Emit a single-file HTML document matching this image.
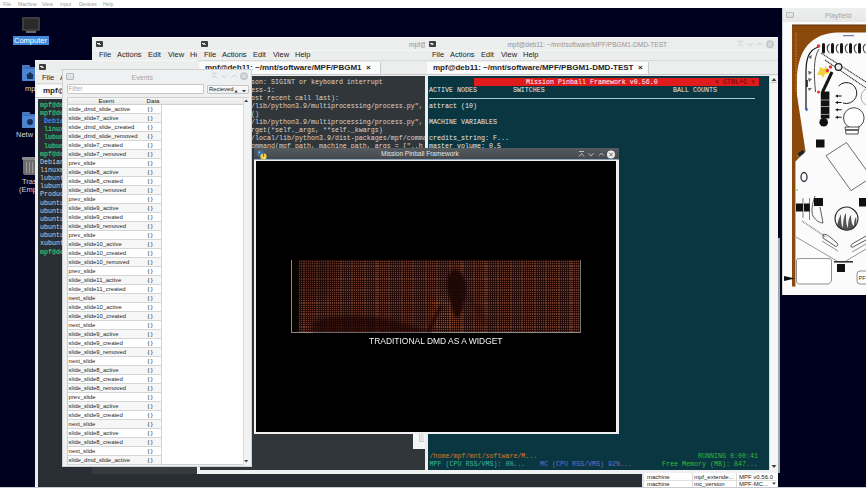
<!DOCTYPE html><html><head><meta charset="utf-8"><style>
*{margin:0;padding:0;box-sizing:border-box}
html,body{width:866px;height:488px;overflow:hidden;background:#00001f;font-family:"Liberation Sans",sans-serif}
.a{position:absolute}
.t{position:absolute;white-space:pre;line-height:1}
.m{position:absolute;white-space:pre;font-family:"Liberation Mono",monospace;font-size:6.67px;line-height:8px}
.icon{position:absolute;width:7px;height:6px;background:#3b3d3f;border-radius:1px}
.icon:after{content:"";position:absolute;left:1px;top:1.5px;width:3px;height:1px;background:#e8e8e8;box-shadow:1px 1px 0 #bbb}
.menu{position:absolute;white-space:pre;font-size:7.5px;line-height:1;color:#232627}
</style></head><body>
<div class="a" style="left:0;top:0;width:866px;height:8px;background:#fff"></div>
<div class="t" style="left:3px;top:1.5px;font-size:5px;color:#9a9a9a">File</div>
<div class="t" style="left:18px;top:1.5px;font-size:5px;color:#9a9a9a">Machine</div>
<div class="t" style="left:42px;top:1.5px;font-size:5px;color:#9a9a9a">View</div>
<div class="t" style="left:60px;top:1.5px;font-size:5px;color:#9a9a9a">Input</div>
<div class="t" style="left:79px;top:1.5px;font-size:5px;color:#9a9a9a">Devices</div>
<div class="t" style="left:103px;top:1.5px;font-size:5px;color:#9a9a9a">Help</div>
<div class="a" style="left:22px;top:17px;width:18px;height:14px;background:#3d3d3d;border-radius:1px"></div>
<div class="a" style="left:24px;top:19px;width:14px;height:10px;background:#2a2a2a"></div>
<div class="a" style="left:26px;top:31px;width:10px;height:2px;background:#6a6a6a"></div>
<div class="a" style="left:13px;top:36px;width:36px;height:9px;background:#4288dd"></div>
<div class="t" style="left:14px;top:37px;font-size:7.5px;color:#fff">Computer</div>
<div class="a" style="left:22px;top:65px;width:8px;height:3px;background:#4a7cc4;border-radius:1px 1px 0 0"></div>
<div class="a" style="left:22px;top:67px;width:16px;height:14px;background:#3f70b8;border-radius:1px"></div>
<div class="a" style="left:22px;top:69px;width:16px;height:12px;background:#4e85cf;border-radius:1px"></div>
<svg class="a" style="left:0;top:0" width="60" height="200"><path d="M30 72 l4 3.5 h-1 v3.5 h-6 v-3.5 h-1 z" fill="#16305a"/></svg>
<div class="t" style="left:25px;top:84.5px;font-size:7.5px;color:#d8d8d8">mp</div>
<div class="a" style="left:22px;top:112px;width:8px;height:3px;background:#4a7cc4;border-radius:1px 1px 0 0"></div>
<div class="a" style="left:22px;top:114px;width:16px;height:14px;background:#3f70b8;border-radius:1px"></div>
<div class="a" style="left:22px;top:116px;width:16px;height:12px;background:#4e85cf;border-radius:1px"></div>
<div class="a" style="left:27px;top:119px;width:6px;height:6px;background:#16305a;border-radius:50%"></div>
<div class="t" style="left:16px;top:131px;font-size:7.5px;color:#d8d8d8">Netw</div>
<div class="a" style="left:22px;top:157px;width:16px;height:3px;background:#8a8a8a;border-radius:1px"></div>
<div class="a" style="left:23px;top:160px;width:14px;height:15px;background:#6d6d6d;border-radius:0 0 2px 2px"></div>
<div class="a" style="left:26px;top:162px;width:1px;height:11px;background:#9a9a9a"></div>
<div class="a" style="left:29px;top:162px;width:1px;height:11px;background:#9a9a9a"></div>
<div class="a" style="left:32px;top:162px;width:1px;height:11px;background:#9a9a9a"></div>
<div class="t" style="left:22px;top:178px;font-size:7.5px;color:#d8d8d8">Tras</div>
<div class="t" style="left:19px;top:186px;font-size:7.5px;color:#d8d8d8">(Emp</div>
<div class="a" style="left:92px;top:37px;width:553px;height:453px;background:#eceded;overflow:hidden">
<div class="a" style="left:0;top:0;width:553px;height:1px;background:#f7f7f8"></div>
<div class="a" style="left:0;top:13px;width:553px;height:1px;background:#f5f6f6"></div>
<div class="a" style="left:0;top:23px;width:553px;height:1px;background:#d9dada"></div>
<div class="icon" style="left:4px;top:4px"></div>
<div class="menu" style="left:7px;top:13.8px">File</div>
<div class="menu" style="left:25px;top:13.8px">Actions</div>
<div class="menu" style="left:56px;top:13.8px">Edit</div>
<div class="menu" style="left:76px;top:13.8px">View</div>
<div class="menu" style="left:98px;top:13.8px">Help</div>
<div class="a" style="left:0;top:36px;width:553px;height:1px;background:#c9cacb"></div>
<div class="a" style="left:2px;top:24.5px;width:100px;height:11.5px;background:#fbfbfb;border-right:1px solid #c9cacb"></div>
<div class="t" style="left:8px;top:26.6px;font-size:8px;font-weight:bold;color:#1b1d1f">mpf@deb11</div>
<div class="a" style="left:3px;top:38px;width:547px;height:412px;background:#292d34"></div>
</div>
<div class="a" style="left:35px;top:60px;width:610px;height:430px;background:#eceded;overflow:hidden">
<div class="a" style="left:0;top:0;width:610px;height:1px;background:#f7f7f8"></div>
<div class="a" style="left:0;top:13px;width:610px;height:1px;background:#f5f6f6"></div>
<div class="a" style="left:0;top:23px;width:610px;height:1px;background:#d9dada"></div>
<div class="icon" style="left:4px;top:4px"></div>
<div class="menu" style="left:7px;top:13.8px">File</div>
<div class="menu" style="left:25px;top:13.8px">Actions</div>
<div class="menu" style="left:56px;top:13.8px">Edit</div>
<div class="menu" style="left:76px;top:13.8px">View</div>
<div class="menu" style="left:98px;top:13.8px">Help</div>
<div class="a" style="left:0;top:37px;width:610px;height:1px;background:#c9cacb"></div>
<div class="a" style="left:2px;top:24.5px;width:200px;height:12.5px;background:#fbfbfb;border-right:1px solid #c9cacb"></div>
<div class="t" style="left:8px;top:26.6px;font-size:8px;font-weight:bold;color:#1b1d1f">mpf@deb11: ~</div>
<div class="a" style="left:3px;top:39px;width:604px;height:388px;background:#292d34"></div>
</div>
<div class="m" style="left:40px;top:100.8px;color:#2fbf71;font-weight:bold">mpf@deb11:</div>
<div class="m" style="left:40px;top:109.0px;color:#2fbf71;font-weight:bold">mpf@deb11:</div>
<div class="m" style="left:40px;top:117.1px;color:#3d8fd8;font-weight:bold"> Debian</div>
<div class="m" style="left:40px;top:125.2px;color:#2fbf71;font-weight:bold"> linux</div>
<div class="m" style="left:40px;top:133.4px;color:#2fbf71;font-weight:bold"> lubuntu</div>
<div class="m" style="left:40px;top:141.6px;color:#2fbf71;font-weight:bold"> lubuntu</div>
<div class="m" style="left:40px;top:149.7px;color:#2fbf71;font-weight:bold">mpf@deb11:</div>
<div class="m" style="left:40px;top:157.8px;color:#cfd2d4;">Debian</div>
<div class="m" style="left:40px;top:166.0px;color:#cfd2d4;">linuxmint</div>
<div class="m" style="left:40px;top:174.2px;color:#cfd2d4;">lubuntu</div>
<div class="m" style="left:40px;top:182.3px;color:#cfd2d4;">lubuntu</div>
<div class="m" style="left:40px;top:190.4px;color:#cfd2d4;">Produc</div>
<div class="m" style="left:40px;top:198.6px;color:#cfd2d4;">ubuntu</div>
<div class="m" style="left:40px;top:206.8px;color:#cfd2d4;">ubuntu</div>
<div class="m" style="left:40px;top:214.9px;color:#cfd2d4;">ubuntu</div>
<div class="m" style="left:40px;top:223.1px;color:#cfd2d4;">ubuntu</div>
<div class="m" style="left:40px;top:231.2px;color:#cfd2d4;">ubuntu</div>
<div class="m" style="left:40px;top:239.4px;color:#cfd2d4;">xubuntu</div>
<div class="m" style="left:40px;top:247.5px;color:#2fbf71;font-weight:bold">mpf@deb11:</div>
<div class="a" style="left:197px;top:37px;width:231px;height:437px;background:#eceded;overflow:hidden">
<div class="a" style="left:0;top:0;width:231px;height:1px;background:#f7f7f8"></div>
<div class="a" style="left:0;top:13px;width:231px;height:1px;background:#f5f6f6"></div>
<div class="a" style="left:0;top:23px;width:231px;height:1px;background:#d9dada"></div>
<div class="icon" style="left:4px;top:4px"></div>
<div class="t" style="left:212px;top:4.5px;font-size:6.6px;color:#939597">mpf@deb11: ~/mnt/software/MPF/PBGM1</div>
<div class="menu" style="left:7px;top:13.8px">File</div>
<div class="menu" style="left:25px;top:13.8px">Actions</div>
<div class="menu" style="left:56px;top:13.8px">Edit</div>
<div class="menu" style="left:76px;top:13.8px">View</div>
<div class="menu" style="left:98px;top:13.8px">Help</div>
<div class="a" style="left:0;top:37px;width:231px;height:1px;background:#c9cacb"></div>
<div class="a" style="left:2px;top:24.5px;width:182px;height:12.5px;background:#fbfbfb;border-right:1px solid #c9cacb"></div>
<div class="t" style="left:8px;top:26.6px;font-size:8px;font-weight:bold;color:#1b1d1f">mpf@deb11: ~/mnt/software/MPF/PBGM1  ×</div>
<div class="a" style="left:3px;top:39px;width:225px;height:395px;background:#31363b"></div>
</div>
<div class="m" style="left:251px;top:78px;color:#d4d6d8;width:174px;overflow:hidden">son: SIGINT or keyboard interrupt</div>
<div class="m" style="left:251px;top:86px;color:#d4d6d8;width:174px;overflow:hidden">ess-1:</div>
<div class="m" style="left:251px;top:94px;color:#d4d6d8;width:174px;overflow:hidden">ost recent call last):</div>
<div class="m" style="left:251px;top:102px;color:#d4d6d8;width:174px;overflow:hidden">/lib/python3.9/multiprocessing/process.py&quot;, line</div>
<div class="m" style="left:251px;top:110px;color:#d4d6d8;width:174px;overflow:hidden">()</div>
<div class="m" style="left:251px;top:118px;color:#d4d6d8;width:174px;overflow:hidden">/lib/python3.9/multiprocessing/process.py&quot;, line</div>
<div class="m" style="left:251px;top:126px;color:#d4d6d8;width:174px;overflow:hidden">rget(*self._args, **self._kwargs)</div>
<div class="m" style="left:251px;top:134px;color:#d4d6d8;width:174px;overflow:hidden">/local/lib/python3.9/dist-packages/mpf/commands</div>
<div class="m" style="left:251px;top:142px;color:#d4d6d8;width:174px;overflow:hidden">ommand(mpf_path, machine_path, args = [&quot;..h</div>
<div class="a" style="left:425px;top:37px;width:353px;height:436px;background:#eceded;overflow:hidden">
<div class="a" style="left:0;top:0;width:353px;height:1px;background:#f7f7f8"></div>
<div class="a" style="left:0;top:13px;width:353px;height:1px;background:#f5f6f6"></div>
<div class="a" style="left:0;top:23px;width:353px;height:1px;background:#d9dada"></div>
<div class="icon" style="left:4px;top:4px"></div>
<div class="t" style="left:82.6px;top:4.5px;font-size:6.6px;color:#939597">mpf@deb11: ~/mnt/software/MPF/PBGM1-DMD-TEST</div>
<div class="menu" style="left:7px;top:13.8px">File</div>
<div class="menu" style="left:25px;top:13.8px">Actions</div>
<div class="menu" style="left:56px;top:13.8px">Edit</div>
<div class="menu" style="left:76px;top:13.8px">View</div>
<div class="menu" style="left:98px;top:13.8px">Help</div>
<div class="a" style="left:0;top:37px;width:353px;height:1px;background:#c9cacb"></div>
<div class="a" style="left:2px;top:24.5px;width:222px;height:12.5px;background:#fbfbfb;border-right:1px solid #c9cacb"></div>
<div class="t" style="left:8px;top:26.6px;font-size:8px;font-weight:bold;color:#1b1d1f">mpf@deb11: ~/mnt/software/MPF/PBGM1-DMD-TEST  ×</div>
<div class="a" style="left:3px;top:39px;width:347px;height:394px;background:#0a3642"></div>
</div>
<div class="a" style="left:474px;top:78px;width:285px;height:7.5px;background:#e01b1b"></div>
<div class="m" style="left:526px;top:78px;color:#fff">Mission Pinball Framework v0.56.0</div>
<div class="m" style="left:715px;top:78px;color:#8a0c0c;font-weight:bold">&lt; CTRL+C &gt;</div>
<div class="m" style="left:429px;top:86px;color:#e8eaec">ACTIVE NODES         SWITCHES</div>
<div class="m" style="left:673px;top:86px;color:#e8eaec">BALL COUNTS</div>
<div class="a" style="left:429px;top:97.5px;width:326px;height:1px;background:#a9c6cc"></div>
<div class="m" style="left:429px;top:102px;color:#e8eaec">attract (10)</div>
<div class="m" style="left:429px;top:118px;color:#e8eaec">MACHINE VARIABLES</div>
<div class="m" style="left:429px;top:134px;color:#e8eaec">credits_string: F...</div>
<div class="m" style="left:429px;top:142px;color:#e8eaec">master_volume: 0.5</div>
<div class="m" style="left:429.5px;top:452px;color:#d6782a">/home/mpf/mnt/software/M...</div>
<div class="m" style="left:429.5px;top:460px;color:#3fb59a">MPF (CPU RSS/VMS): 0%...</div>
<div class="m" style="left:540px;top:460px;color:#6f6fc0">MC (CPU RSS/VMS) 92%...</div>
<div class="m" style="left:698px;top:452px;color:#3ab83a">RUNNING 0:00:41</div>
<div class="m" style="left:662px;top:460px;color:#3ab83a">Free Memory (MB): 847...</div>
<svg class="a" style="left:0;top:0" width="866" height="488"><g fill="none" stroke="#c2c4c6" stroke-width="0.8"><path d="M737.9 41.3 h5 M737.9 46.3 l2.5 -3 l2.5 3"/><path d="M747.9 43.099999999999994 l2.5 2.6 l2.5 -2.6"/><path d="M757.5 45.5 l2.5 -2.6 l2.5 2.6"/></g><circle cx="770" cy="44.3" r="4" fill="#c6c7c9"/><path d="M768.2 42.5 l3.6 3.6 M771.8 42.5 l-3.6 3.6" stroke="#f4f4f4" stroke-width="0.9"/></svg>
<div class="a" style="left:769px;top:76px;width:9px;height:394px;background:#f4f5f5;border-left:1px solid #d8d9da"></div>
<svg class="a" style="left:0;top:0" width="866" height="488"><path d="M771.5 81 l2.5 -3 l2.5 3z M771.5 465 l2.5 3 l2.5 -3z" fill="#444"/><path d="M771 82.5 h6" stroke="#999" stroke-width=".6"/></svg>
<div class="a" style="left:413px;top:434px;width:12px;height:14.5px;background:#f4f5f5"></div>
<div class="a" style="left:419px;top:434px;width:5px;height:8px;background:#e2e3e4;border-left:1px solid #cfd0d1;border-bottom:1px solid #cfd0d1"></div>
<div class="a" style="left:92px;top:467px;width:105px;height:7px;background:#373b40"></div>
<div class="a" style="left:197px;top:470px;width:581px;height:4px;background:#eff0f1"></div>
<div class="a" style="left:778px;top:238px;width:2px;height:235px;background:#a4a7ab"></div>
<div class="a" style="left:642px;top:473px;width:136px;height:14px;background:#fff;border-left:2px solid #e4e5e6"></div>
<div class="a" style="left:644px;top:480px;width:132px;height:1px;background:#e0e0e0"></div>
<div class="a" style="left:692px;top:473px;width:1px;height:14px;background:#dcdcdc"></div>
<div class="a" style="left:736px;top:473px;width:1px;height:14px;background:#dcdcdc"></div>
<div class="t" style="left:647px;top:473.5px;font-size:6px;color:#222">machine</div>
<div class="t" style="left:694px;top:473.5px;font-size:6px;color:#222">mpf_extende...</div>
<div class="t" style="left:739px;top:473.5px;font-size:6px;color:#222">MPF v0.56.0</div>
<div class="t" style="left:647px;top:481px;font-size:6px;color:#222">machine</div>
<div class="t" style="left:694px;top:481px;font-size:6px;color:#222">mc_version</div>
<div class="t" style="left:739px;top:481px;font-size:6px;color:#222">MPF-MC...</div>
<svg class="a" style="left:0;top:0" width="866" height="488"><path d="M772 482.5 l2 2.2 l2 -2.2z" fill="#444"/></svg>
<div class="a" style="left:0;top:486.5px;width:866px;height:1.5px;background:#c9cacd"></div>
<div class="a" style="left:62px;top:69px;width:190px;height:398px;background:#eff0f1;border:1px solid #cfd0d2;overflow:hidden">
<div class="a" style="left:3px;top:3px;width:8px;height:7px;border:1px solid #b8b9bb;background:linear-gradient(#e9eaeb,#d9dadb);border-radius:1px"></div>
<div class="t" style="left:68.6px;top:4px;font-size:7px;color:#a4a6a8">Events</div>
<div class="a" style="left:4px;top:14.3px;width:137px;height:9.7px;background:#fff;border:1px solid #c4c6c8;border-radius:1px"></div>
<div class="t" style="left:5.5px;top:16.3px;font-size:6.3px;color:#a8aaac">Filter</div>
<div class="a" style="left:144px;top:15px;width:42px;height:9px;background:linear-gradient(#fbfbfb,#eeeeee);border:1px solid #c4c6c8;border-radius:1px"></div>
<div class="t" style="left:146px;top:16.8px;font-size:5.9px;color:#222">Recieved</div>
<svg class="a" style="left:0;top:0" width="190" height="40"><path d="M171.5 22.5 l1.6 -2.6 l1.6 2.6z M179 20 l2 2.2 l2 -2.2z" fill="#333"/></svg>
<div class="a" style="left:4px;top:27px;width:182px;height:367.5px;background:#fff;border:1px solid #cdcfd1"></div>
<div class="a" style="left:5px;top:28px;width:175px;height:7px;background:linear-gradient(#f6f6f6,#e8e8e8);border-bottom:1px solid #cfd0d2"></div>
<div class="t" style="left:35.5px;top:27.8px;font-size:6.1px;color:#222">Event</div>
<div class="t" style="left:83.6px;top:27.8px;font-size:6.1px;color:#222">Data</div>
<div class="a" style="left:5px;top:35.4px;width:94px;height:9px;background:#ffffff;border-bottom:1px solid #d4d5d6;border-right:1px solid #d4d5d6"></div>
<div class="t" style="left:5.6px;top:37.0px;font-size:5.95px;color:#262626">slide_dmd_slide_active</div>
<div class="t" style="left:84.5px;top:37.0px;font-size:5.95px;color:#262626;letter-spacing:1.2px">{}</div>
<div class="a" style="left:5px;top:44.4px;width:94px;height:9px;background:#f6f6f6;border-bottom:1px solid #d4d5d6;border-right:1px solid #d4d5d6"></div>
<div class="t" style="left:5.6px;top:46.0px;font-size:5.95px;color:#262626">slide_slide7_active</div>
<div class="t" style="left:84.5px;top:46.0px;font-size:5.95px;color:#262626;letter-spacing:1.2px">{}</div>
<div class="a" style="left:5px;top:53.4px;width:94px;height:9px;background:#ffffff;border-bottom:1px solid #d4d5d6;border-right:1px solid #d4d5d6"></div>
<div class="t" style="left:5.6px;top:55.0px;font-size:5.95px;color:#262626">slide_dmd_slide_created</div>
<div class="t" style="left:84.5px;top:55.0px;font-size:5.95px;color:#262626;letter-spacing:1.2px">{}</div>
<div class="a" style="left:5px;top:62.4px;width:94px;height:9px;background:#f6f6f6;border-bottom:1px solid #d4d5d6;border-right:1px solid #d4d5d6"></div>
<div class="t" style="left:5.6px;top:64.0px;font-size:5.95px;color:#262626">slide_dmd_slide_removed</div>
<div class="t" style="left:84.5px;top:64.0px;font-size:5.95px;color:#262626;letter-spacing:1.2px">{}</div>
<div class="a" style="left:5px;top:71.4px;width:94px;height:9px;background:#ffffff;border-bottom:1px solid #d4d5d6;border-right:1px solid #d4d5d6"></div>
<div class="t" style="left:5.6px;top:73.0px;font-size:5.95px;color:#262626">slide_slide7_created</div>
<div class="t" style="left:84.5px;top:73.0px;font-size:5.95px;color:#262626;letter-spacing:1.2px">{}</div>
<div class="a" style="left:5px;top:80.4px;width:94px;height:9px;background:#f6f6f6;border-bottom:1px solid #d4d5d6;border-right:1px solid #d4d5d6"></div>
<div class="t" style="left:5.6px;top:82.0px;font-size:5.95px;color:#262626">slide_slide7_removed</div>
<div class="t" style="left:84.5px;top:82.0px;font-size:5.95px;color:#262626;letter-spacing:1.2px">{}</div>
<div class="a" style="left:5px;top:89.4px;width:94px;height:9px;background:#ffffff;border-bottom:1px solid #d4d5d6;border-right:1px solid #d4d5d6"></div>
<div class="t" style="left:5.6px;top:91.0px;font-size:5.95px;color:#262626">prev_slide</div>
<div class="t" style="left:84.5px;top:91.0px;font-size:5.95px;color:#262626;letter-spacing:1.2px">{}</div>
<div class="a" style="left:5px;top:98.4px;width:94px;height:9px;background:#f6f6f6;border-bottom:1px solid #d4d5d6;border-right:1px solid #d4d5d6"></div>
<div class="t" style="left:5.6px;top:100.0px;font-size:5.95px;color:#262626">slide_slide8_active</div>
<div class="t" style="left:84.5px;top:100.0px;font-size:5.95px;color:#262626;letter-spacing:1.2px">{}</div>
<div class="a" style="left:5px;top:107.4px;width:94px;height:9px;background:#ffffff;border-bottom:1px solid #d4d5d6;border-right:1px solid #d4d5d6"></div>
<div class="t" style="left:5.6px;top:109.0px;font-size:5.95px;color:#262626">slide_slide8_created</div>
<div class="t" style="left:84.5px;top:109.0px;font-size:5.95px;color:#262626;letter-spacing:1.2px">{}</div>
<div class="a" style="left:5px;top:116.4px;width:94px;height:9px;background:#f6f6f6;border-bottom:1px solid #d4d5d6;border-right:1px solid #d4d5d6"></div>
<div class="t" style="left:5.6px;top:118.0px;font-size:5.95px;color:#262626">slide_slide8_removed</div>
<div class="t" style="left:84.5px;top:118.0px;font-size:5.95px;color:#262626;letter-spacing:1.2px">{}</div>
<div class="a" style="left:5px;top:125.4px;width:94px;height:9px;background:#ffffff;border-bottom:1px solid #d4d5d6;border-right:1px solid #d4d5d6"></div>
<div class="t" style="left:5.6px;top:127.0px;font-size:5.95px;color:#262626">prev_slide</div>
<div class="t" style="left:84.5px;top:127.0px;font-size:5.95px;color:#262626;letter-spacing:1.2px">{}</div>
<div class="a" style="left:5px;top:134.4px;width:94px;height:9px;background:#f6f6f6;border-bottom:1px solid #d4d5d6;border-right:1px solid #d4d5d6"></div>
<div class="t" style="left:5.6px;top:136.0px;font-size:5.95px;color:#262626">slide_slide9_active</div>
<div class="t" style="left:84.5px;top:136.0px;font-size:5.95px;color:#262626;letter-spacing:1.2px">{}</div>
<div class="a" style="left:5px;top:143.4px;width:94px;height:9px;background:#ffffff;border-bottom:1px solid #d4d5d6;border-right:1px solid #d4d5d6"></div>
<div class="t" style="left:5.6px;top:145.0px;font-size:5.95px;color:#262626">slide_slide9_created</div>
<div class="t" style="left:84.5px;top:145.0px;font-size:5.95px;color:#262626;letter-spacing:1.2px">{}</div>
<div class="a" style="left:5px;top:152.4px;width:94px;height:9px;background:#f6f6f6;border-bottom:1px solid #d4d5d6;border-right:1px solid #d4d5d6"></div>
<div class="t" style="left:5.6px;top:154.0px;font-size:5.95px;color:#262626">slide_slide9_removed</div>
<div class="t" style="left:84.5px;top:154.0px;font-size:5.95px;color:#262626;letter-spacing:1.2px">{}</div>
<div class="a" style="left:5px;top:161.4px;width:94px;height:9px;background:#ffffff;border-bottom:1px solid #d4d5d6;border-right:1px solid #d4d5d6"></div>
<div class="t" style="left:5.6px;top:163.0px;font-size:5.95px;color:#262626">prev_slide</div>
<div class="t" style="left:84.5px;top:163.0px;font-size:5.95px;color:#262626;letter-spacing:1.2px">{}</div>
<div class="a" style="left:5px;top:170.4px;width:94px;height:9px;background:#f6f6f6;border-bottom:1px solid #d4d5d6;border-right:1px solid #d4d5d6"></div>
<div class="t" style="left:5.6px;top:172.0px;font-size:5.95px;color:#262626">slide_slide10_active</div>
<div class="t" style="left:84.5px;top:172.0px;font-size:5.95px;color:#262626;letter-spacing:1.2px">{}</div>
<div class="a" style="left:5px;top:179.4px;width:94px;height:9px;background:#ffffff;border-bottom:1px solid #d4d5d6;border-right:1px solid #d4d5d6"></div>
<div class="t" style="left:5.6px;top:181.0px;font-size:5.95px;color:#262626">slide_slide10_created</div>
<div class="t" style="left:84.5px;top:181.0px;font-size:5.95px;color:#262626;letter-spacing:1.2px">{}</div>
<div class="a" style="left:5px;top:188.4px;width:94px;height:9px;background:#f6f6f6;border-bottom:1px solid #d4d5d6;border-right:1px solid #d4d5d6"></div>
<div class="t" style="left:5.6px;top:190.0px;font-size:5.95px;color:#262626">slide_slide10_removed</div>
<div class="t" style="left:84.5px;top:190.0px;font-size:5.95px;color:#262626;letter-spacing:1.2px">{}</div>
<div class="a" style="left:5px;top:197.4px;width:94px;height:9px;background:#ffffff;border-bottom:1px solid #d4d5d6;border-right:1px solid #d4d5d6"></div>
<div class="t" style="left:5.6px;top:199.0px;font-size:5.95px;color:#262626">prev_slide</div>
<div class="t" style="left:84.5px;top:199.0px;font-size:5.95px;color:#262626;letter-spacing:1.2px">{}</div>
<div class="a" style="left:5px;top:206.4px;width:94px;height:9px;background:#f6f6f6;border-bottom:1px solid #d4d5d6;border-right:1px solid #d4d5d6"></div>
<div class="t" style="left:5.6px;top:208.0px;font-size:5.95px;color:#262626">slide_slide11_active</div>
<div class="t" style="left:84.5px;top:208.0px;font-size:5.95px;color:#262626;letter-spacing:1.2px">{}</div>
<div class="a" style="left:5px;top:215.4px;width:94px;height:9px;background:#ffffff;border-bottom:1px solid #d4d5d6;border-right:1px solid #d4d5d6"></div>
<div class="t" style="left:5.6px;top:217.0px;font-size:5.95px;color:#262626">slide_slide11_created</div>
<div class="t" style="left:84.5px;top:217.0px;font-size:5.95px;color:#262626;letter-spacing:1.2px">{}</div>
<div class="a" style="left:5px;top:224.4px;width:94px;height:9px;background:#f6f6f6;border-bottom:1px solid #d4d5d6;border-right:1px solid #d4d5d6"></div>
<div class="t" style="left:5.6px;top:226.0px;font-size:5.95px;color:#262626">next_slide</div>
<div class="t" style="left:84.5px;top:226.0px;font-size:5.95px;color:#262626;letter-spacing:1.2px">{}</div>
<div class="a" style="left:5px;top:233.4px;width:94px;height:9px;background:#ffffff;border-bottom:1px solid #d4d5d6;border-right:1px solid #d4d5d6"></div>
<div class="t" style="left:5.6px;top:235.0px;font-size:5.95px;color:#262626">slide_slide10_active</div>
<div class="t" style="left:84.5px;top:235.0px;font-size:5.95px;color:#262626;letter-spacing:1.2px">{}</div>
<div class="a" style="left:5px;top:242.4px;width:94px;height:9px;background:#f6f6f6;border-bottom:1px solid #d4d5d6;border-right:1px solid #d4d5d6"></div>
<div class="t" style="left:5.6px;top:244.0px;font-size:5.95px;color:#262626">slide_slide10_created</div>
<div class="t" style="left:84.5px;top:244.0px;font-size:5.95px;color:#262626;letter-spacing:1.2px">{}</div>
<div class="a" style="left:5px;top:251.4px;width:94px;height:9px;background:#ffffff;border-bottom:1px solid #d4d5d6;border-right:1px solid #d4d5d6"></div>
<div class="t" style="left:5.6px;top:253.0px;font-size:5.95px;color:#262626">next_slide</div>
<div class="t" style="left:84.5px;top:253.0px;font-size:5.95px;color:#262626;letter-spacing:1.2px">{}</div>
<div class="a" style="left:5px;top:260.4px;width:94px;height:9px;background:#f6f6f6;border-bottom:1px solid #d4d5d6;border-right:1px solid #d4d5d6"></div>
<div class="t" style="left:5.6px;top:262.0px;font-size:5.95px;color:#262626">slide_slide9_active</div>
<div class="t" style="left:84.5px;top:262.0px;font-size:5.95px;color:#262626;letter-spacing:1.2px">{}</div>
<div class="a" style="left:5px;top:269.4px;width:94px;height:9px;background:#ffffff;border-bottom:1px solid #d4d5d6;border-right:1px solid #d4d5d6"></div>
<div class="t" style="left:5.6px;top:271.0px;font-size:5.95px;color:#262626">slide_slide9_created</div>
<div class="t" style="left:84.5px;top:271.0px;font-size:5.95px;color:#262626;letter-spacing:1.2px">{}</div>
<div class="a" style="left:5px;top:278.4px;width:94px;height:9px;background:#f6f6f6;border-bottom:1px solid #d4d5d6;border-right:1px solid #d4d5d6"></div>
<div class="t" style="left:5.6px;top:280.0px;font-size:5.95px;color:#262626">slide_slide9_removed</div>
<div class="t" style="left:84.5px;top:280.0px;font-size:5.95px;color:#262626;letter-spacing:1.2px">{}</div>
<div class="a" style="left:5px;top:287.4px;width:94px;height:9px;background:#ffffff;border-bottom:1px solid #d4d5d6;border-right:1px solid #d4d5d6"></div>
<div class="t" style="left:5.6px;top:289.0px;font-size:5.95px;color:#262626">next_slide</div>
<div class="t" style="left:84.5px;top:289.0px;font-size:5.95px;color:#262626;letter-spacing:1.2px">{}</div>
<div class="a" style="left:5px;top:296.4px;width:94px;height:9px;background:#f6f6f6;border-bottom:1px solid #d4d5d6;border-right:1px solid #d4d5d6"></div>
<div class="t" style="left:5.6px;top:298.0px;font-size:5.95px;color:#262626">slide_slide8_active</div>
<div class="t" style="left:84.5px;top:298.0px;font-size:5.95px;color:#262626;letter-spacing:1.2px">{}</div>
<div class="a" style="left:5px;top:305.4px;width:94px;height:9px;background:#ffffff;border-bottom:1px solid #d4d5d6;border-right:1px solid #d4d5d6"></div>
<div class="t" style="left:5.6px;top:307.0px;font-size:5.95px;color:#262626">slide_slide8_created</div>
<div class="t" style="left:84.5px;top:307.0px;font-size:5.95px;color:#262626;letter-spacing:1.2px">{}</div>
<div class="a" style="left:5px;top:314.4px;width:94px;height:9px;background:#f6f6f6;border-bottom:1px solid #d4d5d6;border-right:1px solid #d4d5d6"></div>
<div class="t" style="left:5.6px;top:316.0px;font-size:5.95px;color:#262626">slide_slide8_removed</div>
<div class="t" style="left:84.5px;top:316.0px;font-size:5.95px;color:#262626;letter-spacing:1.2px">{}</div>
<div class="a" style="left:5px;top:323.4px;width:94px;height:9px;background:#ffffff;border-bottom:1px solid #d4d5d6;border-right:1px solid #d4d5d6"></div>
<div class="t" style="left:5.6px;top:325.0px;font-size:5.95px;color:#262626">prev_slide</div>
<div class="t" style="left:84.5px;top:325.0px;font-size:5.95px;color:#262626;letter-spacing:1.2px">{}</div>
<div class="a" style="left:5px;top:332.4px;width:94px;height:9px;background:#f6f6f6;border-bottom:1px solid #d4d5d6;border-right:1px solid #d4d5d6"></div>
<div class="t" style="left:5.6px;top:334.0px;font-size:5.95px;color:#262626">slide_slide9_active</div>
<div class="t" style="left:84.5px;top:334.0px;font-size:5.95px;color:#262626;letter-spacing:1.2px">{}</div>
<div class="a" style="left:5px;top:341.4px;width:94px;height:9px;background:#ffffff;border-bottom:1px solid #d4d5d6;border-right:1px solid #d4d5d6"></div>
<div class="t" style="left:5.6px;top:343.0px;font-size:5.95px;color:#262626">slide_slide9_created</div>
<div class="t" style="left:84.5px;top:343.0px;font-size:5.95px;color:#262626;letter-spacing:1.2px">{}</div>
<div class="a" style="left:5px;top:350.4px;width:94px;height:9px;background:#f6f6f6;border-bottom:1px solid #d4d5d6;border-right:1px solid #d4d5d6"></div>
<div class="t" style="left:5.6px;top:352.0px;font-size:5.95px;color:#262626">next_slide</div>
<div class="t" style="left:84.5px;top:352.0px;font-size:5.95px;color:#262626;letter-spacing:1.2px">{}</div>
<div class="a" style="left:5px;top:359.4px;width:94px;height:9px;background:#ffffff;border-bottom:1px solid #d4d5d6;border-right:1px solid #d4d5d6"></div>
<div class="t" style="left:5.6px;top:361.0px;font-size:5.95px;color:#262626">slide_slide8_active</div>
<div class="t" style="left:84.5px;top:361.0px;font-size:5.95px;color:#262626;letter-spacing:1.2px">{}</div>
<div class="a" style="left:5px;top:368.4px;width:94px;height:9px;background:#f6f6f6;border-bottom:1px solid #d4d5d6;border-right:1px solid #d4d5d6"></div>
<div class="t" style="left:5.6px;top:370.0px;font-size:5.95px;color:#262626">slide_slide8_created</div>
<div class="t" style="left:84.5px;top:370.0px;font-size:5.95px;color:#262626;letter-spacing:1.2px">{}</div>
<div class="a" style="left:5px;top:377.4px;width:94px;height:9px;background:#ffffff;border-bottom:1px solid #d4d5d6;border-right:1px solid #d4d5d6"></div>
<div class="t" style="left:5.6px;top:379.0px;font-size:5.95px;color:#262626">next_slide</div>
<div class="t" style="left:84.5px;top:379.0px;font-size:5.95px;color:#262626;letter-spacing:1.2px">{}</div>
<div class="a" style="left:5px;top:386.4px;width:94px;height:9px;background:#f6f6f6;border-bottom:1px solid #d4d5d6;border-right:1px solid #d4d5d6"></div>
<div class="t" style="left:5.6px;top:388.0px;font-size:5.95px;color:#262626">slide_dmd_slide_active</div>
<div class="t" style="left:84.5px;top:388.0px;font-size:5.95px;color:#262626;letter-spacing:1.2px">{}</div>
<div class="a" style="left:180px;top:28px;width:6px;height:367px;background:#f2f2f2;border-left:1px solid #dcdcdc"></div>
<svg class="a" style="left:0;top:0" width="190" height="400"><path d="M181.2 32 l2 -2.4 l2 2.4z M181.2 390 l2 2.4 l2 -2.4z" fill="#444"/></svg>
</div>
<svg class="a" style="left:0;top:0" width="866" height="488"><g fill="none" stroke="#c2c4c6" stroke-width="0.8"><path d="M211.8 73.2 h5 M211.8 78.2 l2.5 -3 l2.5 3"/><path d="M221.9 75.0 l2.5 2.6 l2.5 -2.6"/><path d="M231.9 77.4 l2.5 -2.6 l2.5 2.6"/></g><circle cx="244" cy="76.2" r="4" fill="#c6c7c9"/><path d="M242.2 74.4 l3.6 3.6 M245.8 74.4 l-3.6 3.6" stroke="#f4f4f4" stroke-width="0.9"/></svg>
<div class="a" style="left:254px;top:148px;width:365px;height:286px;background:#f0f0f0;overflow:hidden">
<div class="a" style="left:0;top:0;width:365px;height:12px;background:linear-gradient(#555a5f,#45494e);border-bottom:1px solid #8fa8c0"></div>
<svg class="a" style="left:0;top:0" width="20" height="14"><rect x="3.5" y="2.5" width="6" height="6" rx="2" fill="#3d72b0"/><rect x="6.5" y="5.5" width="6" height="6" rx="2" fill="#f2cd3a"/><path d="M6.5 5.5 h3 v3" fill="none" stroke="#3d72b0" stroke-width="1"/><circle cx="5.3" cy="4.2" r=".6" fill="#fff"/><circle cx="10.7" cy="9.8" r=".6" fill="#fff"/></svg>
<div class="t" style="left:127px;top:3px;font-size:6.5px;color:#e6e6e6">Mission Pinball Framework</div>
<div class="a" style="left:2px;top:12.5px;width:360px;height:271px;background:#000"></div>
</div>
<svg class="a" style="left:0;top:0" width="866" height="488"><g fill="none" stroke="#d8d8d8" stroke-width="0.8"><path d="M579.0 151.5 h5 M579.0 156.5 l2.5 -3 l2.5 3"/><path d="M588.5 153.3 l2.5 2.6 l2.5 -2.6"/><path d="M599.0 155.7 l2.5 -2.6 l2.5 2.6"/></g><circle cx="611" cy="154.5" r="4" fill="#eeeeee"/><path d="M609.2 152.7 l3.6 3.6 M612.8 152.7 l-3.6 3.6" stroke="#555" stroke-width="0.9"/></svg>
<div class="a" style="left:291px;top:260px;width:290px;height:73px;background:#0b0302;border-left:1px solid #8a8a8a;border-bottom:1px solid #8a8a8a;border-right:1px solid #777"></div>
<div class="a" style="left:299px;top:260px;width:281px;height:72px;background:#6e3a2a"></div>
<svg class="a" style="left:0;top:0" width="866" height="488"><defs><filter id="bl" x="-50%" y="-50%" width="200%" height="200%"><feGaussianBlur stdDeviation="2"/></filter><filter id="bl1" x="-50%" y="-50%" width="200%" height="200%"><feGaussianBlur stdDeviation="1"/></filter></defs>
<path d="M299 262 L340 262 L330 295 L299 300 Z" fill="rgba(25,6,3,.25)" filter="url(#bl)"/>
<path d="M312 322 C335 313 370 315 400 322 C415 326 425 330 432 332 L312 332 Z" fill="rgba(25,6,3,.7)" filter="url(#bl)"/>
<ellipse cx="445" cy="312" rx="14" ry="18" fill="rgba(190,95,40,.45)" filter="url(#bl)"/>
<path d="M454 270 C447 272 446 282 448 292 C450 302 452 312 456 318 C461 318 464 305 466 292 C467 280 462 270 454 270 Z" fill="rgba(20,5,3,.8)" filter="url(#bl1)"/>
<path d="M441 306 L428 332" stroke="rgba(20,5,3,.75)" stroke-width="3" filter="url(#bl1)"/>
<path d="M470 300 C480 310 486 322 490 332" stroke="rgba(20,5,3,.35)" stroke-width="4" fill="none" filter="url(#bl)"/>
</svg>
<div class="a" style="left:299px;top:260px;width:281px;height:72px;background:repeating-linear-gradient(90deg,rgba(0,0,0,0) 0,rgba(0,0,0,0) 1.2px,rgba(28,5,3,.8) 1.2px,rgba(28,5,3,.8) 2.18px),repeating-linear-gradient(0deg,rgba(0,0,0,0) 0,rgba(0,0,0,0) 1.2px,rgba(28,5,3,.8) 1.2px,rgba(28,5,3,.8) 2.18px)"></div>
<div class="t" style="left:369.2px;top:337px;font-size:9.3px;color:#f2f2f2;transform:scaleX(.909);transform-origin:0 0">TRADITIONAL DMD AS A WIDGET</div>
<div class="a" style="left:782px;top:8px;width:84px;height:287px;background:#fbfbfb;border-left:1px solid #d5d6d8;overflow:hidden">
<div class="a" style="left:0;top:0;width:84px;height:14px;background:linear-gradient(#eeefef,#e6e7e8)"></div>
<div class="a" style="left:3px;top:4px;width:8px;height:6px;border:1px solid #b8b9bb;background:linear-gradient(#e9eaeb,#d9dadb);border-radius:1px"></div>
<div class="t" style="left:42px;top:4px;font-size:7px;color:#a4a6a8">Playfield</div>
</div>
<svg class="a" style="left:782px;top:8px" width="84" height="287" viewBox="782 8 84 287">
<path d="M792 25 H866 V32.6 H838 C812 33 797 50 797 80 L797 95 L805.5 151.5 L795.4 161.5 V286.5 H792 Z" fill="#8b4a0c"/>
<path d="M792 25 H866" stroke="#5a3010" stroke-width="1"/>
<line x1="796" y1="33" x2="796" y2="92" stroke="#f0b040" stroke-width=".6" stroke-dasharray="1.5 1"/>
<line x1="843" y1="35.7" x2="854" y2="35.7" stroke="#5a5a9a" stroke-width="1"/>
<rect x="822" y="43" width="3" height="10.5" rx="1.5" fill="#151515"/><path d="M829.5 44 C826.5 46 826.5 51 829.5 53" fill="none" stroke="#444" stroke-width="1.1"/><rect x="831" y="43" width="3" height="10.5" rx="1.5" fill="#151515"/><path d="M838.5 44 C835.5 46 835.5 51 838.5 53" fill="none" stroke="#444" stroke-width="1.1"/><rect x="840" y="43" width="3" height="10.5" rx="1.5" fill="#151515"/><path d="M847.5 44 C844.5 46 844.5 51 847.5 53" fill="none" stroke="#444" stroke-width="1.1"/><rect x="849" y="43" width="3" height="10.5" rx="1.5" fill="#151515"/><path d="M856.5 44 C853.5 46 853.5 51 856.5 53" fill="none" stroke="#444" stroke-width="1.1"/><rect x="858" y="43" width="3" height="10.5" rx="1.5" fill="#151515"/><path d="M865.5 44 C862.5 46 862.5 51 865.5 53" fill="none" stroke="#444" stroke-width="1.1"/><rect x="867" y="43" width="3" height="10.5" rx="1.5" fill="#151515"/><path d="M874.5 44 C871.5 46 871.5 51 874.5 53" fill="none" stroke="#444" stroke-width="1.1"/>
<path d="M821 53 L866 82" stroke="#333" stroke-width="1.1" stroke-dasharray="1.2 .6"/>
<path d="M825 60 L866 88" stroke="#333" stroke-width="1.1" stroke-dasharray="1.2 .6"/>
<path d="M818.5 47 C808 50 806 60 806 72 L806 110" fill="none" stroke="#111" stroke-width="1.2"/>
<path d="M819 49 C813 58 814 75 815.5 92" fill="none" stroke="#222" stroke-width=".8"/>
<path d="M808 57 l4 -2 l-1 4 z M808 71 l4 1 l-3 3z M808 78 l4 1 l-3 3z M808 88 l4 0 l-3 3z" fill="#666"/>
<path d="M807 80 V87" stroke="#111" stroke-width="1.5"/>
<rect x="806" y="108" width="1.5" height="3" fill="#3050c0"/>
<path d="M820 67 L824 69 L826 66 L827 70 L830 73 L825 74 L823 78 L821 75 L817 75 L819 71 Z" fill="#f0d040"/>
<circle cx="818.5" cy="46" r="1.8" fill="#e03535"/><circle cx="830.5" cy="67" r="1.7" fill="#e03535"/><circle cx="827.5" cy="70.5" r="1.7" fill="#e03535"/><circle cx="818.5" cy="92" r="1.5" fill="#e03535"/>
<circle cx="838.5" cy="67" r="3.3" fill="#f4f4f4" stroke="#222" stroke-width="1.2"/>
<path d="M822.5 92 L832 72" stroke="#111" stroke-width="3"/>
<path d="M823 89 l1 -2 M825 85 l1 -2 M827 81 l1 -2" stroke="#2a4ab0" stroke-width=".5"/>
<rect x="820.8" y="91.5" width="8.6" height="27" fill="#111"/>
<path d="M820.8 100 h8.6 M820.8 106.5 h8.6 M820.8 114.4 h8.6" stroke="#eee" stroke-width=".6"/>
<circle cx="823.7" cy="122.3" r="4.3" fill="#111"/>
<path d="M835 96 l3 -1.5 v1 h3.6 v1 h-3.6 v1z M835 102.5 l3 -1.5 v1 h3.6 v1 h-3.6 v1z M835 109.7 l3 -1.5 v1 h3.6 v1 h-3.6 v1z M835 117.3 l3 -1.5 v1 h3.6 v1 h-3.6 v1z" fill="#111"/>
<path d="M838.5 86 A10.5 10.5 0 1 1 843 103" fill="none" stroke="#222" stroke-width="1"/>
<circle cx="853.8" cy="118" r="10.3" fill="#fff" stroke="#333" stroke-width=".9"/>
<path d="M845 127 H859 L858 134 H846 Z" fill="#fff" stroke="#222" stroke-width=".8"/>
<path d="M846 130 h12" stroke="#333" stroke-width="1.5"/>
<circle cx="870" cy="97" r="9" fill="none" stroke="#aaa" stroke-width="1"/>
<rect x="816" y="139.5" width="8.5" height="8" fill="#111"/>
<path d="M826 155.7 L846.5 142.5 L871.5 177.4 L851 190.6 Z" fill="none" stroke="#333" stroke-width=".7"/>
<rect x="797.5" y="151.5" width="7" height="3.5" rx="1.5" fill="#223" transform="rotate(-35 801 153)"/>
<circle cx="797.5" cy="156" r=".8" fill="#4c4"/><circle cx="805" cy="150" r=".8" fill="#4c4"/>
<ellipse cx="804" cy="177" rx="3" ry="4.5" fill="none" stroke="#334" stroke-width="1.3"/>
<circle cx="797" cy="190" r=".8" fill="#4c4"/>
<rect x="796" y="203.5" width="7" height="8" fill="#111"/><rect x="804" y="203.5" width="6" height="8" fill="#111"/>
<rect x="814" y="198" width="9" height="8" fill="#111"/><rect x="859" y="198" width="8" height="8.5" fill="#111"/>
<path d="M803 198 V218 M809.5 198 V220" stroke="#333" stroke-width=".6"/>
<path d="M815 196 C812 204 811 212 813 216 C816 221 820 223 823 223 L820 207" fill="none" stroke="#333" stroke-width=".8"/>
<ellipse cx="846.5" cy="218.6" rx="11.5" ry="11.5" fill="#f8f8f8" stroke="#222" stroke-width="1" transform="rotate(-20 846.5 218.6)"/>
<path d="M837 226 C838 220 840 216 841 214 C841 220 841 224 843 228 C843 220 844 216 846 213 C846 220 846 224 848 228 C848 222 849 217 851 215 C851 221 852 225 854 226 C854 221 855 218 856 217 C857 222 856 227 853 229 C848 231 842 231 837 226 Z" fill="#2a2a2a" fill-opacity=".8"/>
<path d="M802 221 L826 237" stroke="#777" stroke-width="1.5" stroke-dasharray=".8 .8"/>
<path d="M823 235 C825 233 828 235 837 243 C839 245 837 247 835 246 L823 238 Z" fill="none" stroke="#333" stroke-width=".8"/>
<path d="M822 241 L838 251" stroke="#444" stroke-width=".6"/>
<path d="M866 236 L852 244 C850 246 851 248 853 247 L866 240" fill="none" stroke="#333" stroke-width=".8"/>
<path d="M852 252 L866 244" stroke="#444" stroke-width=".6"/>
<path d="M796 237 L837 261 M846 261 L866 249" stroke="#333" stroke-width=".5"/>
<rect x="834" y="261" width="19" height="1.6" fill="#333"/>
<rect x="837" y="264" width="8" height="8" fill="#111"/>
<path d="M799 258.6 H829 C831 258.6 831.5 259.5 831.5 261 V281 L829 284 H800 C798 284 796.5 283 796.5 281 V261 C796.5 259.5 797.5 258.6 799 258.6 Z" fill="#fff" stroke="#444" stroke-width=".6"/>
<path d="M784 276 L795 278.5 L784 281 Z" fill="#111"/>
<rect x="857" y="271" width="12" height="13" rx="3" fill="#fff" stroke="#444" stroke-width=".6"/>
<text x="858.5" y="280" font-size="5.5" font-family="Liberation Sans" fill="#333">PF</text>
</svg>
</body></html>
